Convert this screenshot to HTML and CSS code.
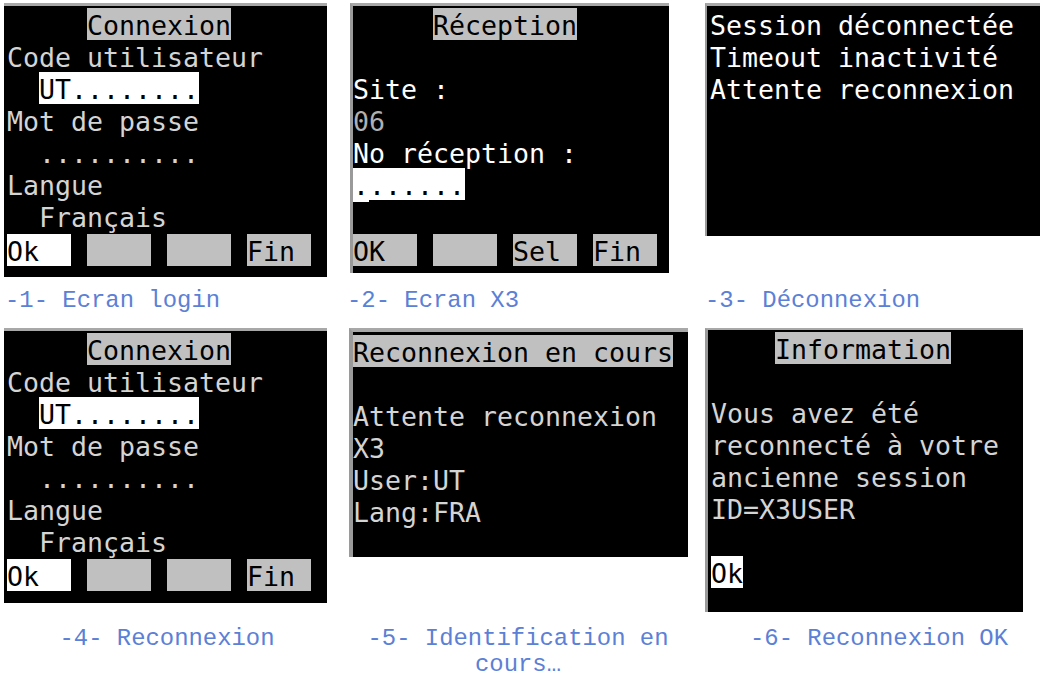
FILE: index.html
```html
<!DOCTYPE html>
<html lang="fr">
<head>
<meta charset="utf-8">
<title>Écrans de reconnexion</title>
<link rel="stylesheet" href="styles.css">
</head>
<body>
<div class="sheet">
  <figure class="cell c1 r1">
    <div class="stage">
      <div class="screen s1 dim">
        <div class="ln">     <span class="hl">Connexion</span></div>
        <div class="ln">Code utilisateur</div>
        <div class="ln">  <span class="inp">UT........</span></div>
        <div class="ln">Mot de passe</div>
        <div class="ln">  ..........</div>
        <div class="ln">Langue</div>
        <div class="ln">  Français</div>
        <div class="ln keys"><span class="key on">Ok  </span> <span class="key">    </span> <span class="key">    </span> <span class="key">Fin </span></div>
      </div>
    </div>
    <figcaption class="cap">-1- Ecran login</figcaption>
  </figure>

  <figure class="cell c2 r1">
    <div class="stage">
      <div class="screen s2 bright">
        <div class="ln">     <span class="hl">Réception</span></div>
        <div class="ln"></div>
        <div class="ln">Site :</div>
        <div class="ln val">06</div>
        <div class="ln">No réception :</div>
        <div class="ln"><span class="inp"><span class="cur">.</span>......</span></div>
        <div class="ln"></div>
        <div class="ln keys"><span class="key">OK  </span> <span class="key">    </span> <span class="key">Sel </span> <span class="key">Fin </span></div>
      </div>
    </div>
    <figcaption class="cap">-2- Ecran X3</figcaption>
  </figure>

  <figure class="cell c3 r1">
    <div class="stage">
      <div class="screen s3 bright">
        <div class="ln">Session déconnectée</div>
        <div class="ln">Timeout inactivité</div>
        <div class="ln">Attente reconnexion</div>
      </div>
    </div>
    <figcaption class="cap">-3- Déconnexion</figcaption>
  </figure>

  <figure class="cell c1 r2">
    <div class="stage">
      <div class="screen s4 dim">
        <div class="ln">     <span class="hl">Connexion</span></div>
        <div class="ln">Code utilisateur</div>
        <div class="ln">  <span class="inp">UT........</span></div>
        <div class="ln">Mot de passe</div>
        <div class="ln">  ..........</div>
        <div class="ln">Langue</div>
        <div class="ln">  Français</div>
        <div class="ln keys"><span class="key on">Ok  </span> <span class="key">    </span> <span class="key">    </span> <span class="key">Fin </span></div>
      </div>
    </div>
    <figcaption class="cap">-4- Reconnexion</figcaption>
  </figure>

  <figure class="cell c2 r2">
    <div class="stage">
      <div class="screen s5 dim">
        <div class="ln"><span class="hl">Reconnexion en cours</span></div>
        <div class="ln"></div>
        <div class="ln">Attente reconnexion</div>
        <div class="ln">X3</div>
        <div class="ln">User:UT</div>
        <div class="ln">Lang:FRA</div>
      </div>
    </div>
    <figcaption class="cap">-5- Identification en cours…</figcaption>
  </figure>

  <figure class="cell c3 r2">
    <div class="stage">
      <div class="screen s6 dim">
        <div class="ln">    <span class="hl">Information</span></div>
        <div class="ln"></div>
        <div class="ln">Vous avez été</div>
        <div class="ln">reconnecté à votre</div>
        <div class="ln">ancienne session</div>
        <div class="ln">ID=X3USER</div>
        <div class="ln"></div>
        <div class="ln"><span class="key on">Ok</span></div>
      </div>
    </div>
    <figcaption class="cap">-6- Reconnexion OK</figcaption>
  </figure>
</div>
</body>
</html>
```

FILE: styles.css
```css
* { box-sizing: border-box; }

html, body {
  margin: 0;
  padding: 0;
  background: #ffffff;
}

.sheet {
  display: grid;
  grid-template-columns: 346px 359px 344px;
  grid-template-rows: 316px 365px;
  width: 1049px;
  height: 681px;
  overflow: hidden;
}

.cell {
  margin: 0;
  display: flex;
  flex-direction: column;
}

.r1 .stage { height: 286px; }
.r2 .stage { height: 310px; }

/* screens */
.screen {
  background: #000;
  border-top: 3px solid #a8a8a8;
  font-family: "DejaVu Sans Mono", monospace;
  font-size: 26.58px;
  overflow: hidden;
}

.dim { color: #d4d4d4; }
.bright { color: #ffffff; }
.val { color: #b0b0b0; }

.ln {
  height: 32px;
  line-height: 36px;
  white-space: pre;
}

.keys { margin-top: 2px; }

.hl, .inp, .key {
  display: inline-block;
  height: 32px;
  line-height: 36px;
  vertical-align: top;
  color: #000;
}

.hl { background: #c0c0c0; }
.inp { background: #ffffff; }
.key { background: #c0c0c0; }
.key.on { background: #ffffff; }

.cur {
  display: inline-block;
  height: 34px;
  vertical-align: top;
  background: #ffffff;
}

.s1 {
  margin: 3px 0 0 4px;
  width: 323px;
  height: 274px;
  padding: 2px 0 0 3px;
}

.s2 {
  margin: 3px 0 0 4px;
  width: 319px;
  height: 270px;
  border-left: 3px solid #9a9a9a;
  padding: 2px 0 0 0;
}

.s3 {
  margin: 3px 0 0 0;
  width: 335px;
  height: 233px;
  border-left: 2px solid #9a9a9a;
  padding: 2px 0 0 3px;
}

.s4 {
  margin: 12px 0 0 4px;
  width: 323px;
  height: 275px;
  padding: 2px 0 0 3px;
}

.s5 {
  margin: 12px 0 0 3px;
  width: 339px;
  height: 229px;
  border-top-width: 4px;
  border-left: 4px solid #9a9a9a;
  padding: 3px 0 0 0;
}

.s6 {
  margin: 12px 0 0 0;
  width: 318px;
  height: 284px;
  border-top-width: 2px;
  border-left: 3px solid #9a9a9a;
  padding: 2px 0 0 3px;
}

/* captions */
.cap {
  font-family: "Liberation Mono", "Courier New", monospace;
  font-size: 23.9px;
  color: #5b80d6;
  white-space: normal;
}

.r1 .cap { line-height: 30px; }
.r2 .cap { line-height: 26px; text-align: center; }

.c1.r1 .cap { padding-left: 5px; }
.c2.r1 .cap { padding-left: 1px; }
.c1.r2 .cap { padding-right: 12px; }
.c2.r2 .cap { padding-right: 15px; }
.c3.r2 .cap { padding-left: 4px; }
```
